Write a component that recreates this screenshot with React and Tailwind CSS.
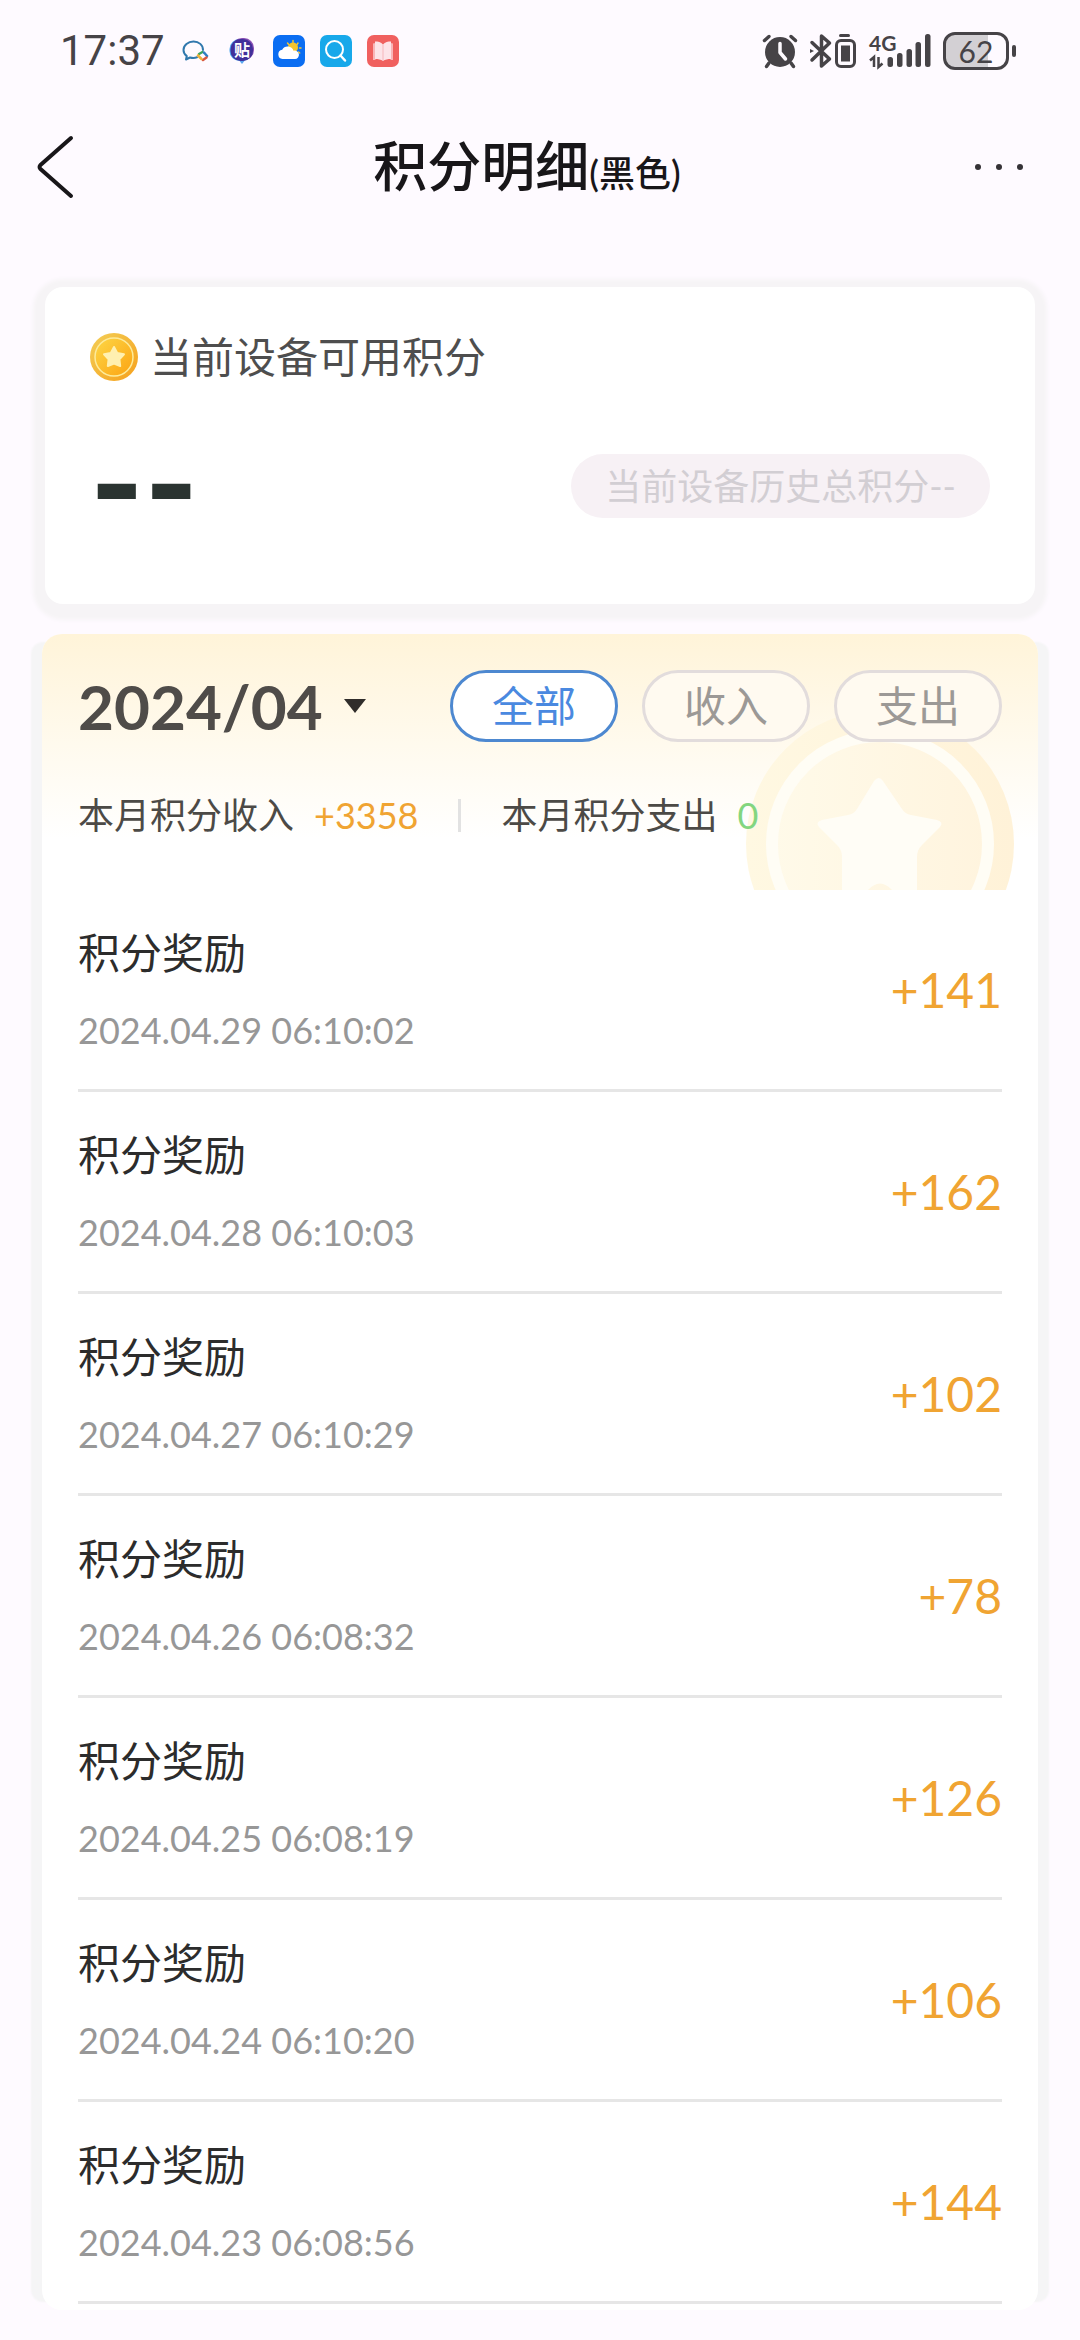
import React, { useState } from "react";

const records = [
  { title: "积分奖励", time: "2024.04.29 06:10:02", amount: 141 },
  { title: "积分奖励", time: "2024.04.28 06:10:03", amount: 162 },
  { title: "积分奖励", time: "2024.04.27 06:10:29", amount: 102 },
  { title: "积分奖励", time: "2024.04.26 06:08:32", amount: 78 },
  { title: "积分奖励", time: "2024.04.25 06:08:19", amount: 126 },
  { title: "积分奖励", time: "2024.04.24 06:10:20", amount: 106 },
  { title: "积分奖励", time: "2024.04.23 06:08:56", amount: 144 },
];

const tabs = [
  { key: "all", label: "全部" },
  { key: "income", label: "收入" },
  { key: "expense", label: "支出" },
];

function NotificationIcons() {
  return (
    <div className="flex items-center gap-[15px]">
      {/* Chat */}
      <svg className="w-8 h-8" viewBox="0 0 32 32" fill="none">
        <path
          d="M24 15c0-5-4-8.500-9.500-8.500S4.500 10.500 4.500 15c0 2.600 1.300 4.600 3.300 6.100L7 24.500l4-2c2.500.700 5 .600 7-.200"
          stroke="#3078ad"
          strokeWidth="2"
          strokeLinecap="round"
          strokeLinejoin="round"
        />
        <path d="M20 19l3.500-2" stroke="#3fa55c" strokeWidth="2.500" strokeLinecap="round" />
        <path d="M25 17.500l3 3.500" stroke="#2f7fc4" strokeWidth="2.500" strokeLinecap="round" />
        <path d="M27.500 22.500l-3.500 2.500" stroke="#d9573f" strokeWidth="2.500" strokeLinecap="round" />
        <path d="M19 20.500l3.500 3.500" stroke="#eeb13c" strokeWidth="2.500" strokeLinecap="round" />
      </svg>
      {/* Forum */}
      <svg className="w-8 h-8" viewBox="0 0 32 32">
        <path d="M12 24l4 5 4-5z" fill="#58a6f0" />
        <rect x="3.500" y="4" width="23" height="22" rx="10" fill="#4aa5ee" />
        <rect x="6" y="3" width="22" height="22" rx="10" fill="#8a4fb5" />
        <rect x="4.500" y="4" width="22.500" height="22" rx="10" fill="#41309a" />
        <text
          x="16"
          y="21"
          textAnchor="middle"
          fontSize="16"
          fontWeight="700"
          fontFamily="Noto Sans CJK SC, sans-serif"
          fill="#fff"
        >
          贴
        </text>
      </svg>
      {/* Weather */}
      <svg className="w-8 h-8" viewBox="0 0 32 32">
        <rect width="32" height="32" rx="7" fill="#0b6df2" />
        <g stroke="#f3c62f" strokeWidth="1.500" strokeLinecap="round">
          <path d="M20 5.500v2M14.500 8l1.200 1.500M25 8l-1 1.500M26.500 13h1.500M25.500 17l1.200 1" />
        </g>
        <circle cx="20" cy="12.500" r="5" fill="#f6c52b" />
        <path
          d="M9.500 24a4.700 4.700 0 0 1-.3-9.300 6.200 6.200 0 0 1 11.300 1.100A4.200 4.200 0 1 1 22 24z"
          fill="#fff"
        />
      </svg>
      {/* Search */}
      <svg className="w-8 h-8" viewBox="0 0 32 32" fill="none">
        <rect width="32" height="32" rx="7" fill="#18a8ea" />
        <circle cx="14.500" cy="14.500" r="8.500" stroke="#fff" strokeWidth="2" />
        <path d="M20.500 20.500l4.500 5" stroke="#fff" strokeWidth="2.500" strokeLinecap="round" />
      </svg>
      {/* Reader */}
      <svg className="w-8 h-8" viewBox="0 0 32 32">
        <rect width="32" height="32" rx="7" fill="#f0605f" />
        <path d="M6 8.500l2.500-.5v17H6zM26 8.500l-2.500-.5v17H26z" fill="#f9b5b8" />
        <path
          d="M8 6.500c3 0 6 .500 8 3 2-2.500 5-3 8-3V24c-3 0-6 .500-8 2-2-1.500-5-2-8-2z"
          fill="#fde3e8"
        />
        <path d="M16 9.500V26" stroke="#f6b6bb" strokeWidth="1" />
      </svg>
    </div>
  );
}

function StatusBar() {
  return (
    <div className="flex items-center justify-between h-[102px] pl-[60px] pr-16 text-[#464347]">
      <div className="flex items-center gap-[14px]">
        <span className="font-['Roboto',sans-serif] text-[42px] leading-[60px]">17:37</span>
        <NotificationIcons />
      </div>

      <div className="flex items-center">
        {/* Alarm */}
        <svg className="w-9 h-9 mr-[11px]" viewBox="0 0 36 36" fill="none">
          <circle cx="18" cy="19" r="15" fill="currentColor" />
          <g stroke="currentColor" strokeWidth="3.500" strokeLinecap="round">
            <path d="M2.500 7.500l4.500-4M33.500 7.500l-4.500-4M7 30l-2.500 3.500M29 30l2.500 3.500" />
          </g>
          <path
            d="M18 10.500v9l5.500 6.500"
            stroke="#fefaff"
            strokeWidth="3.500"
            strokeLinecap="round"
            strokeLinejoin="round"
          />
        </svg>
        {/* Bluetooth with the headset battery */}
        <svg className="w-12 h-9 mr-3" viewBox="0 0 48 36" fill="none">
          <g
            stroke="currentColor"
            strokeWidth="3.500"
            strokeLinecap="round"
            strokeLinejoin="round"
          >
            <path d="M3 9.500L20.500 26 12.500 33V3l8 7L3 27" />
            <path d="M31.500 2.500h8" strokeWidth="3" />
            <rect x="27.500" y="7.500" width="18" height="26" rx="4.500" strokeWidth="3" />
          </g>
          <path d="M1 16l4 2-4 2z" fill="currentColor" />
          <rect x="32" y="12.500" width="9" height="16" fill="currentColor" />
        </svg>
        {/* Signal */}
        <svg className="w-16 h-9 mr-[10px] overflow-visible" viewBox="0 0 64 36">
          <text x="0" y="18" fontSize="21" fontWeight="700" fill="currentColor">
            4G
          </text>
          <path
            d="M1 27.500l4-3.500v10M13.500 30.500l-4 3.500V24"
            fill="none"
            stroke="currentColor"
            strokeWidth="2.500"
          />
          <g fill="currentColor">
            <rect x="18.500" y="24" width="5.500" height="10" rx="2.500" />
            <rect x="28" y="20" width="5.500" height="14" rx="2.500" />
            <rect x="37.500" y="16" width="5.500" height="18" rx="2.500" />
            <rect x="46.500" y="9" width="5.500" height="25" rx="2.500" />
            <rect x="56" y="1" width="5.500" height="33" rx="2.500" />
          </g>
        </svg>
        {/* Battery */}
        <div className="flex items-center justify-center w-[66px] h-[38px] rounded-xl border-[3px] border-current bg-linear-to-r from-[#d3d0d4] from-70% to-transparent to-70% text-[30px] leading-8">
          62
        </div>
        <div className="w-1 h-3 ml-[3px] rounded-full bg-current" />
      </div>
    </div>
  );
}

function Header() {
  return (
    <header className="flex items-center h-[130px] px-9 text-[#181619]">
      <button className="flex items-center w-16 h-16" aria-label="返回">
        <svg className="w-10 h-16" viewBox="0 0 40 64" fill="none">
          <path
            d="M35 3L4.500 30c-1.300 1.300-1.300 2.700 0 4L35 61"
            stroke="currentColor"
            strokeWidth="4"
            strokeLinecap="round"
          />
        </svg>
      </button>
      <h1 className="flex-1 text-center text-[54px] leading-[72px] font-medium">
        积分明细<span className="text-4xl font-medium">(黑色)</span>
      </h1>
      <button className="flex items-center justify-center w-[90px] h-16" aria-label="更多">
        <svg className="w-12 h-3" viewBox="0 0 48 12" fill="#353236">
          <circle cx="3" cy="6" r="3" />
          <circle cx="24" cy="6" r="3" />
          <circle cx="45" cy="6" r="3" />
        </svg>
      </button>
    </header>
  );
}

function CoinIcon() {
  return (
    <svg className="w-12 h-12" viewBox="0 0 48 48">
      <defs>
        <linearGradient id="coinRim" x1="0" y1="0" x2="1" y2="1">
          <stop offset="0" stopColor="#f3cf57" />
          <stop offset="1" stopColor="#f6a01c" />
        </linearGradient>
        <linearGradient id="coinFace" x1="0" y1="0" x2="1" y2="1">
          <stop offset="0" stopColor="#fdd746" />
          <stop offset="1" stopColor="#fca312" />
        </linearGradient>
      </defs>
      <circle cx="24" cy="24" r="24" fill="url(#coinRim)" />
      <circle cx="24" cy="24" r="19" fill="url(#coinFace)" stroke="#fdeb9a" strokeWidth="1.500" />
      <path
        d="M24 14l3.200 6 6.800 1.200-4.600 5 .8 6.800L24 30.500 17.800 33l.8-6.800-4.600-5 6.800-1.200z"
        fill="#fff0b0"
        stroke="#fff0b0"
        strokeWidth="2"
        strokeLinejoin="round"
      />
    </svg>
  );
}

function BalanceCard() {
  return (
    <section className="mx-[45px] mt-[55px] px-[45px] pt-10 pb-[86px] rounded-[18px] bg-white shadow-[0_4px_4px_12px_#f6f4f6]">
      <div className="flex items-center gap-3">
        <CoinIcon />
        <h2 className="text-[42px] leading-[60px] text-[#4e4e4e]">当前设备可用积分</h2>
      </div>
      <div className="flex items-center justify-between mt-[67px]">
        <span className="font-['Roboto',sans-serif] text-[138px] leading-[64px] font-bold text-[#2b3431]">
          --
        </span>
        <span className="px-[34px] rounded-full bg-[#f7f1f5] text-4xl leading-[64px] text-[#d2ced3]">
          当前设备历史总积分--
        </span>
      </div>
    </section>
  );
}

function CoinWatermark() {
  return (
    <svg
      className="absolute right-6 bottom-0 w-[268px] h-[180px]"
      viewBox="0 0 268 180"
      aria-hidden="true"
    >
      <defs>
        <linearGradient id="markRim" x1="0" y1="0" x2="1" y2="0">
          <stop offset="0" stopColor="#fff8e2" />
          <stop offset="1" stopColor="#fff2d8" />
        </linearGradient>
        <linearGradient id="markFace" x1="0" y1="0" x2="1" y2="0">
          <stop offset="0" stopColor="#fffae9" />
          <stop offset="1" stopColor="#fff4de" />
        </linearGradient>
      </defs>
      <circle cx="134" cy="134" r="134" fill="url(#markRim)" />
      <circle cx="134" cy="134" r="108" fill="url(#markFace)" stroke="#fffdf5" strokeWidth="12" />
      <path
        d="M128 71q5-6 9 0l19 28q3 5 9 6l26 5q7 2 3 7l-18 18q-5 5-5 12v33h-25q-12-13-24 0H96v-33q0-7-5-12l-18-18q-4-5 3-7l26-5q6-1 9-6z"
        fill="#fffdf6"
      />
    </svg>
  );
}

function RecordRow({ record }) {
  return (
    <li className="flex items-center justify-between h-[202px] border-b-[3px] border-[#e6e6e6]">
      <div>
        <p className="text-[42px] leading-[60px] text-[#2c2c2c]">{record.title}</p>
        <p className="mt-5 text-4xl leading-[54px] text-[#979797]">{record.time}</p>
      </div>
      <span className="text-5xl leading-[60px] text-[#f0a432]">+{record.amount}</span>
    </li>
  );
}

export default function App() {
  const [activeTab, setActiveTab] = useState("all");
  const visible = activeTab === "expense" ? [] : records;

  return (
    <div className="min-h-screen bg-[#fefaff] font-['Lato','Noto_Sans_CJK_SC',sans-serif]">
      <StatusBar />
      <Header />
      <BalanceCard />

      <section className="mx-[42px] mt-[30px] pb-[6px] rounded-[20px] bg-white shadow-[-19px_0_2px_-8px_#f5f5f6,19px_0_2px_-8px_#f5f5f6]">
        <div className="relative h-[256px] px-9 pt-9 rounded-t-[20px] bg-linear-to-b from-[#fff4d9] to-white to-80%">
          <CoinWatermark />
          <div className="relative flex items-center justify-between">
            <label className="flex items-center gap-5 text-[#4f4c49]">
              <select
                className="appearance-none bg-transparent text-[62px] leading-[72px] font-bold outline-none"
                aria-label="月份"
              >
                <option>2024/04</option>
              </select>
              <svg className="w-6 h-4" viewBox="0 0 24 16">
                <path d="M1 1h22L12 15z" fill="#302d2a" />
              </svg>
            </label>
            <div className="flex gap-6">
              {tabs.map((tab) => (
                <button
                  key={tab.key}
                  onClick={() => setActiveTab(tab.key)}
                  className={
                    activeTab === tab.key
                      ? "w-[168px] h-[72px] rounded-full border-[3px] border-[#4d88d0] bg-white text-[42px] leading-[60px] text-[#4a89e0]"
                      : "w-[168px] h-[72px] rounded-full border-[3px] border-[#e2dcdc] bg-[#fffaf0] text-[42px] leading-[60px] text-[#9c9996]"
                  }
                >
                  {tab.label}
                </button>
              ))}
            </div>
          </div>

          <div className="relative flex items-center mt-[46px] text-4xl leading-[54px] text-[#4c4a46]">
            <span>本月积分收入</span>
            <span className="ml-5 text-[#f0a432]">+3358</span>
            <span className="w-[3px] h-[33px] mx-10 bg-[#e2e2e2]" />
            <span>本月积分支出</span>
            <span className="ml-5 text-[#83d67f]">0</span>
          </div>
        </div>

        <ul className="px-9">
          {visible.map((record) => (
            <RecordRow key={record.time} record={record} />
          ))}
        </ul>
      </section>
    </div>
  );
}
